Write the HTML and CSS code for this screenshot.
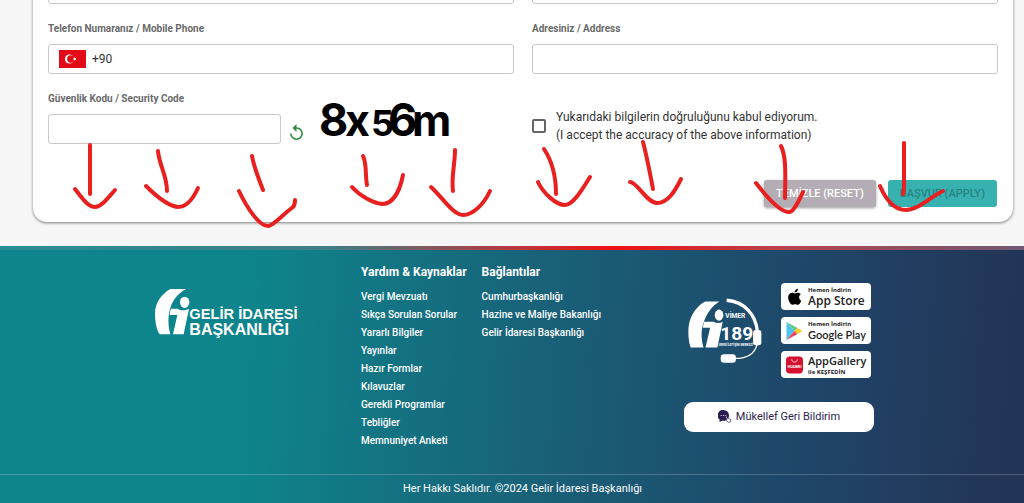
FILE: index.html
```
<!DOCTYPE html>
<html lang="tr">
<head>
  <meta charset="UTF-8">
  <meta name="viewport" content="width=device-width, initial-scale=1.0">
  <title>Gelir İdaresi Başkanlığı</title>
  <link rel="stylesheet" href="styles.css">
</head>
<body>
  <main class="page">
    <form class="card">
      <div class="form-row">
        <input class="text-input" type="text" aria-label="Ad / Name">
        <input class="text-input" type="text" aria-label="Soyad / Surname">
      </div>

      <div class="form-row">
        <div class="field">
          <label class="field-label" for="phone">Telefon Numaranız / Mobile Phone</label>
          <div class="phone-box">
            <svg class="flag" viewBox="0 0 27 18" aria-hidden="true">
              <rect width="27" height="18" fill="#e30a17"/>
              <circle cx="10.5" cy="9" r="4.6" fill="#fff"/>
              <circle cx="11.8" cy="9" r="3.7" fill="#e30a17"/>
              <path d="M13.4 9l1.5-.5V6.9l1 1.3 1.5-.5-.9 1.3.9 1.3-1.5-.5-1 1.3V9.5z" fill="#fff"/>
            </svg>
            <input class="phone-input" id="phone" type="tel" value="+90">
          </div>
        </div>
        <div class="field">
          <label class="field-label" for="address">Adresiniz / Address</label>
          <input class="text-input" id="address" type="text">
        </div>
      </div>

      <div class="form-row">
        <div class="field">
          <label class="field-label" for="captcha">Güvenlik Kodu / Security Code</label>
          <div class="captcha-row">
            <input class="text-input" id="captcha" type="text">
            <button class="refresh" type="button" aria-label="Yenile">
              <svg viewBox="4 1 16 20"><path d="M12 5V1L7 6l5 5V7c3.31 0 6 2.69 6 6s-2.69 6-6 6-6-2.69-6-6H4c0 4.42 3.58 8 8 8s8-3.58 8-8-3.58-8-8-8z" fill="#2e8b3d"/></svg>
            </button>
            <svg class="captcha-code" viewBox="0 0 140 60">
              <text y="46"><tspan x="0" font-size="45">8</tspan><tspan x="26" font-size="43">x</tspan><tspan x="52" font-size="36">5</tspan><tspan x="69" font-size="45">6</tspan><tspan x="93" font-size="43">m</tspan></text>
            </svg>
          </div>
        </div>
        <label class="consent">
          <input class="consent-box" type="checkbox">
          <span>Yukarıdaki bilgilerin doğruluğunu kabul ediyorum.<br>(I accept the accuracy of the above information)</span>
        </label>
      </div>

      <div class="actions">
        <button class="btn btn-reset" type="reset">TEMİZLE (RESET)</button>
        <button class="btn btn-apply" type="submit" disabled>BAŞVUR (APPLY)</button>
      </div>
    </form>
  </main>

  <footer class="footer">
    <div class="footer-main">
      <svg class="gib-logo" viewBox="0 0 432 159" role="img" aria-label="Gelir İdaresi Başkanlığı">
        <path d="M94 6H46C16 24 0 50 0 80c0 27 6 50 14 62h32c-8-30-7-56 0-80C54 38 70 18 94 6z"/>
        <ellipse cx="89" cy="46" rx="14" ry="17"/>
        <path d="M48 65h20c9 6 22 6 34 0L86 142H54l13-58H44c1-8 2-14 4-19z"/>
        <text x="103" y="97" font-size="44">GELİR İDARESİ</text>
        <text x="103" y="144" font-size="48">BAŞKANLIĞI</text>
      </svg>

      <nav class="footer-links">
        <div>
          <h2 class="links-title">Yardım &amp; Kaynaklar</h2>
          <ul class="links-list">
            <li><a href="#">Vergi Mevzuatı</a></li>
            <li><a href="#">Sıkça Sorulan Sorular</a></li>
            <li><a href="#">Yararlı Bilgiler</a></li>
            <li><a href="#">Yayınlar</a></li>
            <li><a href="#">Hazır Formlar</a></li>
            <li><a href="#">Kılavuzlar</a></li>
            <li><a href="#">Gerekli Programlar</a></li>
            <li><a href="#">Tebliğler</a></li>
            <li><a href="#">Memnuniyet Anketi</a></li>
          </ul>
        </div>
        <div>
          <h2 class="links-title">Bağlantılar</h2>
          <ul class="links-list">
            <li><a href="#">Cumhurbaşkanlığı</a></li>
            <li><a href="#">Hazine ve Maliye Bakanlığı</a></li>
            <li><a href="#">Gelir İdaresi Başkanlığı</a></li>
          </ul>
        </div>
      </nav>

      <div class="contact">
        <div class="contact-top">
          <svg class="vimer" viewBox="20 20 230 204" role="img" aria-label="VİMER 189">
            <path d="M118 33H75C40 52 24 88 24 125c0 20 3 36 7 47h39c-9-30-7-60 2-80 9-24 22-44 46-59z"/>
            <ellipse cx="117" cy="74" rx="13" ry="17"/>
            <path d="M72 94h28c9 5 20 5 28 0l-16 78H76l14-60H68c1-8 2-12 4-18z"/>
            <path class="vimer-line" stroke-width="10" d="M140 29c54 4 88 44 93 94"/>
            <path class="vimer-line" stroke-width="4" d="M232 163c-8 30-35 42-66 42"/>
            <rect x="220" y="119" width="25" height="46" rx="8"/>
            <rect x="122" y="192" width="46" height="26" rx="10"/>
            <text x="136" y="84" font-size="20">VİMER</text>
            <text x="121" y="149" font-size="58">189</text>
            <text x="115" y="168" font-size="9">VERGİ İLETİŞİM MERKEZİ</text>
          </svg>
          <div class="stores">
            <a class="store" href="#">
              <svg class="store-icon" viewBox="2 1 20 22" aria-hidden="true"><path d="M17.6 12.3c0-2.400 2-3.500 2.100-3.600-1.200-1.700-2.900-1.900-3.600-2-1.500-.1-3 .9-3.700.9-.8 0-2-.9-3.200-.9-1.700 0-3.200 1-4.100 2.500-1.700 3-.4 7.500 1.300 9.900.8 1.200 1.800 2.500 3.100 2.500 1.200 0 1.700-.8 3.200-.8s1.900.8 3.200.8 2.200-1.200 3-2.400c1-1.400 1.300-2.700 1.400-2.800-.1 0-2.700-1-2.700-4.100zM15.200 5.100c.7-.8 1.100-2 1-3.100-1 0-2.200.7-2.900 1.500-.6.700-1.200 1.900-1 3 1.100.1 2.200-.6 2.900-1.400z"/></svg>
              <span class="store-text"><small>Hemen İndirin</small><b>App Store</b></span>
            </a>
            <a class="store" href="#">
              <svg class="store-icon" viewBox="0 0 16 18" aria-hidden="true">
                <path d="M0 0v18l8-9z" fill="#4fc3f0"/>
                <path d="M0 0l11 6-3 3z" fill="#5dc983"/>
                <path d="M0 18l11-6-3-3z" fill="#ee4056"/>
                <path d="M11 6l5 3-5 3-3-3z" fill="#fdc928"/>
              </svg>
              <span class="store-text store-google"><small>Hemen İndirin</small><b>Google Play</b></span>
            </a>
            <a class="store" href="#">
              <svg class="store-icon" viewBox="0 0 18 18" aria-hidden="true">
                <rect width="18" height="18" rx="4" fill="#d4122f"/>
                <path d="M6 3c.5 4 5.500 4 6 0" fill="none" stroke="#fff" stroke-width=".9"/>
                <text x="9" y="12" font-size="4" font-weight="700" text-anchor="middle" fill="#fff">HUAWEI</text>
              </svg>
              <span class="store-text store-gallery"><b>AppGallery</b><small>ile KEŞFEDİN</small></span>
            </a>
          </div>
        </div>
        <button class="feedback" type="button">
          <svg class="feedback-icon" viewBox="0 0 13 13" aria-hidden="true">
            <path d="M5.500 0a5.500 5.500 0 0 1 5.500 5.500c0 3-2.300 5.300-5.500 5.300H4.300L1.500 12l.2-2.200A5.500 5.500 0 0 1 5.500 0z" fill="#2b1d52"/>
            <circle cx="3.200" cy="5.500" r=".6" fill="#fff"/><circle cx="5.500" cy="5.500" r=".6" fill="#fff"/><circle cx="7.800" cy="5.500" r=".6" fill="#fff"/>
            <path d="M7.500 6.500l1.500 3-1.200-.3 2 3h2.500l.4-3-3-.8-1.200-2.200z" fill="#fff" stroke="#2b1d52" stroke-width=".6"/>
          </svg>
          Mükellef Geri Bildirim
        </button>
      </div>
    </div>
    <p class="copyright">Her Hakkı Saklıdır. ©2024 Gelir İdaresi Başkanlığı</p>
  </footer>

  <!-- hand-drawn arrows over the form -->
  <svg class="arrows" viewBox="0 0 1024 240" aria-hidden="true">
    <path d="M90 145v49M75 189c7 9 13 18 20 18 6 0 11-7 20-17"/>
    <path d="M158 151c1 14 9 24 9 40M146 186c9 9 22 20 32 21 9 0 15-8 20-19"/>
    <path d="M252 156c2 12 7 23 11 34M239 191c8 17 20 35 29 35 5 0 12-9 25-19 1-1 2-4 2-7"/>
    <path d="M363 156c4 8 2 19 4 29M352 187c8 9 21 16 30 17 9 0 17-9 21-29"/>
    <path d="M455 150c0 14-4 28-2 41M431 187c12 11 22 28 32 28s21-11 27-24"/>
    <path d="M544 149c8 12 12 27 12 45M538 182c5 11 18 23 27 23 8 0 17-15 25-28"/>
    <path d="M643 142c4 15 7 31 10 47M630 182c7 0 17 21 27 21 11 0 18-12 24-24"/>
    <path d="M781 146c6 12 4 35 4 52M756 183c10 13 24 29 33 29 5 0 10-12 14-20"/>
    <path d="M904 143v40c0 4 0 8-1 11M880 186c6 14 14 24 26 24s24-13 37-19"/>
  </svg>
</body>
</html>
```
FILE: styles.css
```
:root {
  --text: #333;
  --text-label: #6a6a6a;
  --border: #c8c8c8;
  --teal: #38b1b1;
  --annotation: #e8201f;
  --font-sans: Roboto, "Liberation Sans", sans-serif;
}

* {
  box-sizing: border-box;
}

body {
  margin: 0;
  position: relative;
  min-height: 100vh;
  display: flex;
  flex-direction: column;
  overflow-x: hidden;
  background: #f6f6f6;
  color: var(--text);
  font-family: var(--font-sans);
  font-size: 12px;
}

button,
input {
  font-family: inherit;
}

/* Form card */
.page {
  margin-top: -40px;
  padding: 0 11px 24px 33px;
}

.card {
  display: flex;
  flex-direction: column;
  gap: 17px;
  padding: 14px 15px 15px;
  background: #fff;
  border-radius: 14px;
  box-shadow: 0 1px 3px rgba(0, 0, 0, 0.5);
}

.form-row {
  display: grid;
  grid-template-columns: 1fr 1fr;
  gap: 18px;
}

.field {
  display: flex;
  flex-direction: column;
  gap: 7px;
}

.field-label {
  color: var(--text-label);
  font-size: 10px;
  font-weight: 700;
  line-height: 16px;
}

.text-input,
.phone-box {
  width: 100%;
  height: 30px;
  padding: 0 10px;
  background: #fff;
  border: 1px solid var(--border);
  border-radius: 3px;
}

.phone-box {
  display: flex;
  align-items: center;
  gap: 6px;
}

.flag {
  width: 27px;
  height: 18px;
}

.phone-input {
  flex: 1;
  padding: 0;
  border: none;
  outline: none;
  color: var(--text);
  font-size: 12px;
}

.captcha-row {
  display: flex;
  align-items: center;
  height: 30px;
}

.captcha-row .text-input {
  width: 50%;
}

.refresh {
  margin: 6px 16px 0 9px;
  padding: 0;
  width: 13px;
  height: 16px;
  border: none;
  background: none;
  cursor: pointer;
}

.refresh svg {
  display: block;
  width: 100%;
  height: 100%;
}

.captcha-code {
  flex: none;
  width: 140px;
  height: 60px;
  margin-bottom: 18px;
  font-family: Inter, sans-serif;
  font-weight: 700;
}

.consent {
  display: flex;
  align-items: center;
  gap: 10px;
  padding-top: 16px;
  line-height: 18px;
}

.consent-box {
  appearance: none;
  width: 14px;
  height: 14px;
  margin: 0;
  border: 2px solid #666;
  border-radius: 2px;
}

.consent-box:checked {
  background: var(--teal);
}

.actions {
  display: flex;
  justify-content: flex-end;
  gap: 12px;
  margin-top: 19px;
  padding-right: 1px;
}

.btn {
  height: 27px;
  padding: 0 12px;
  border: none;
  border-radius: 3px;
  font-size: 11px;
  font-weight: 500;
}

.btn-reset {
  background: #b5adb5;
  color: #fff;
  box-shadow: 0 1px 3px rgba(0, 0, 0, 0.4);
}

.btn-apply {
  background: var(--teal);
  color: #278484;
}

/* Footer */
.footer {
  flex: 1;
  display: flex;
  flex-direction: column;
  background: linear-gradient(94deg, #0e858c 24%, #1a5c76 57%, #1f4468 80%, #233556 98%);
  color: #fff;
}

.footer::before {
  content: "";
  height: 4px;
  background: linear-gradient(90deg, #2a8d95 0%, #3f7f86 32%, #b8393f 50%, #f01010 60%, #b8434d 76%, #6e5a74 100%);
}

.footer-main {
  flex: 1;
  display: grid;
  grid-template-columns: 206fr 323fr 190fr;
  align-items: start;
  padding: 13px 150px 24px 155px;
}

.gib-logo {
  width: 144px;
  height: 53px;
  margin-top: 24px;
  fill: #fff;
  font-family: "Liberation Sans", Arial, sans-serif;
  font-weight: 700;
}

.footer-links {
  display: flex;
  gap: 15px;
}

.links-title {
  margin: 0 0 7px;
  font-size: 12px;
  font-weight: 700;
  line-height: 18px;
}

.links-list {
  margin: 0;
  padding: 0;
  list-style: none;
  font-size: 10px;
  font-weight: 500;
  line-height: 18px;
}

.links-list a {
  color: #fff;
  text-decoration: none;
}

.contact {
  display: flex;
  flex-direction: column;
  gap: 24px;
  padding-top: 20px;
}

.contact-top {
  display: flex;
  align-items: center;
  justify-content: space-between;
  padding: 0 3px;
}

.vimer {
  width: 76px;
  height: 68px;
  fill: #fff;
  font-weight: 700;
}

.vimer-line {
  fill: none;
  stroke: #fff;
}

.stores {
  display: flex;
  flex-direction: column;
  gap: 7px;
}

.store {
  display: flex;
  align-items: center;
  gap: 5px;
  width: 90px;
  height: 27px;
  padding-left: 5px;
  background: #fff;
  border-radius: 4px;
  color: #222;
  text-decoration: none;
}

.store-icon {
  flex: none;
  width: 17px;
  height: 18px;
}

.store-text {
  display: flex;
  flex-direction: column;
  font-family: "Open Sans", sans-serif;
  white-space: nowrap;
}

.store-text small {
  font-size: 6px;
  font-weight: 700;
  line-height: 8px;
}

.store-text b {
  font-size: 12px;
  font-weight: 600;
  line-height: 14px;
}

.store-google b {
  font-family: Lato, sans-serif;
  font-size: 11px;
}

.store-gallery b {
  font-size: 11px;
}

.feedback {
  display: flex;
  align-items: center;
  justify-content: center;
  gap: 5px;
  height: 30px;
  padding: 0 0 2px;
  background: #fff;
  border: none;
  border-radius: 9px;
  color: #2b2350;
  font-size: 11px;
}

.feedback-icon {
  width: 13px;
  height: 13px;
}

.copyright {
  margin: 0;
  padding-left: 21px;
  border-top: 1px solid rgba(255, 255, 255, 0.2);
  font-size: 11px;
  line-height: 28px;
  text-align: center;
}

.arrows {
  position: absolute;
  top: 0;
  left: 0;
  width: 100%;
  pointer-events: none;
  fill: none;
  stroke: var(--annotation);
  stroke-width: 4;
  stroke-linecap: round;
  stroke-linejoin: round;
}
```
